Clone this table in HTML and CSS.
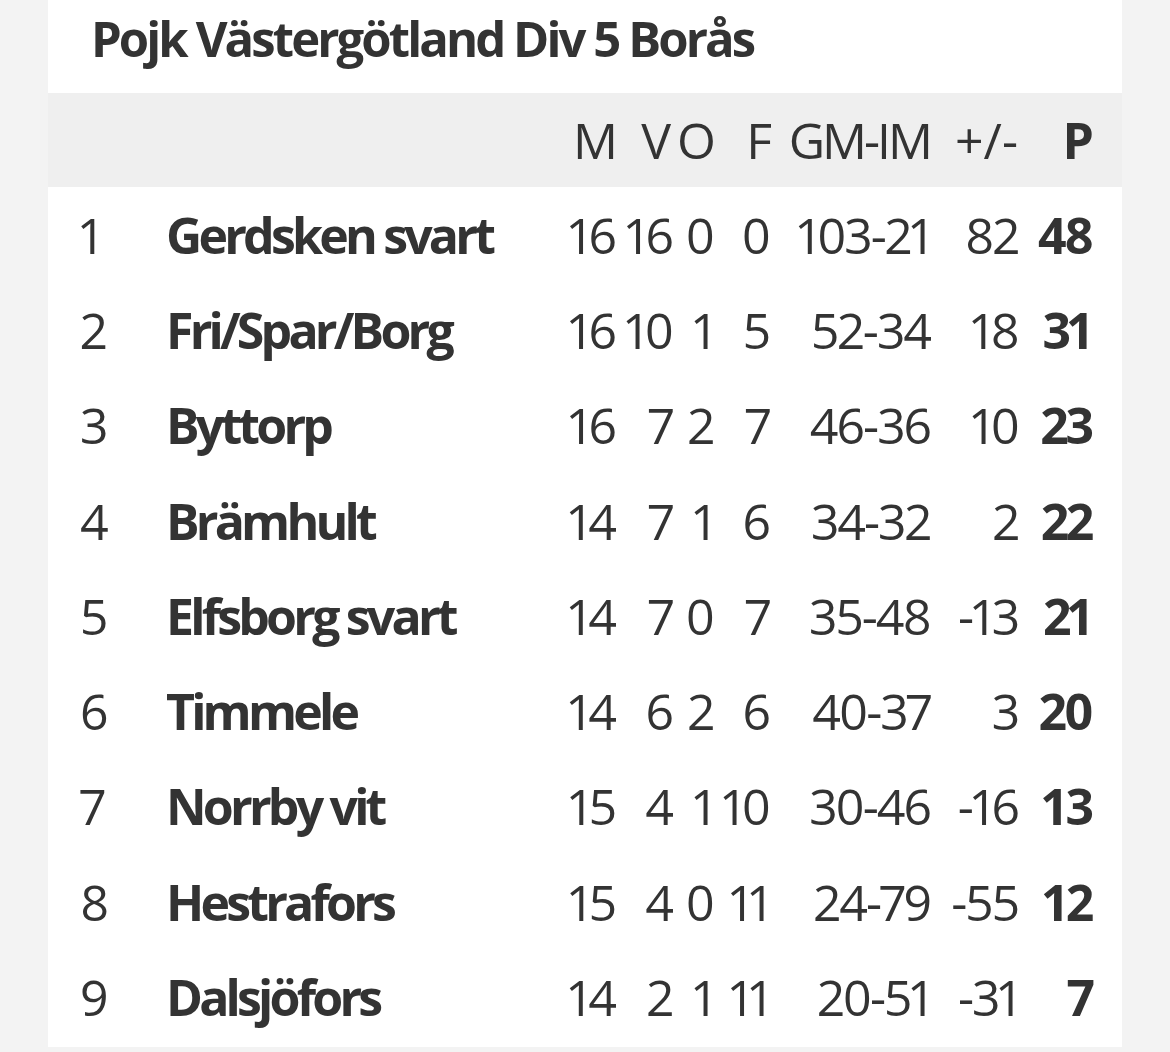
FILE: index.html
```html
<!DOCTYPE html>
<html lang="sv"><head><meta charset="utf-8"><title>Pojk Västergötland Div 5 Borås</title><link rel="stylesheet" href="styles.css"></head>
<body>
<div class="card">
  <h1 class="title">Pojk Västergötland Div 5 Borås</h1>
  <div class="row head">
    <span></span><span></span>
    <span class="num">M</span><span class="num hv">V</span><span class="num">O</span><span class="num">F</span><span class="num">GM-IM</span><span class="num hpm">+/-</span><span class="num pts">P</span>
  </div>
  <div class="row"><span class="rank">1</span><span class="team">Gerdsken svart</span><span class="num">16</span><span class="num">16</span><span class="num">0</span><span class="num">0</span><span class="num">103-21</span><span class="num">82</span><span class="num pts">48</span></div>
  <div class="row"><span class="rank">2</span><span class="team">Fri/Spar/Borg</span><span class="num">16</span><span class="num">10</span><span class="num">1</span><span class="num">5</span><span class="num">52-34</span><span class="num">18</span><span class="num pts">31</span></div>
  <div class="row"><span class="rank">3</span><span class="team">Byttorp</span><span class="num">16</span><span class="num">7</span><span class="num">2</span><span class="num">7</span><span class="num">46-36</span><span class="num">10</span><span class="num pts">23</span></div>
  <div class="row"><span class="rank">4</span><span class="team">Brämhult</span><span class="num">14</span><span class="num">7</span><span class="num">1</span><span class="num">6</span><span class="num">34-32</span><span class="num">2</span><span class="num pts">22</span></div>
  <div class="row"><span class="rank">5</span><span class="team">Elfsborg svart</span><span class="num">14</span><span class="num">7</span><span class="num">0</span><span class="num">7</span><span class="num">35-48</span><span class="num">-13</span><span class="num pts">21</span></div>
  <div class="row"><span class="rank">6</span><span class="team">Timmele</span><span class="num">14</span><span class="num">6</span><span class="num">2</span><span class="num">6</span><span class="num">40-37</span><span class="num">3</span><span class="num pts">20</span></div>
  <div class="row"><span class="rank">7</span><span class="team">Norrby vit</span><span class="num">15</span><span class="num">4</span><span class="num">1</span><span class="num">10</span><span class="num">30-46</span><span class="num">-16</span><span class="num pts">13</span></div>
  <div class="row"><span class="rank">8</span><span class="team">Hestrafors</span><span class="num">15</span><span class="num">4</span><span class="num">0</span><span class="num">11</span><span class="num">24-79</span><span class="num">-55</span><span class="num pts">12</span></div>
  <div class="row"><span class="rank">9</span><span class="team">Dalsjöfors</span><span class="num">14</span><span class="num">2</span><span class="num">1</span><span class="num">11</span><span class="num">20-51</span><span class="num">-31</span><span class="num pts">7</span></div>
</div>
</body></html>
```
FILE: styles.css
```css
html, body {
  margin: 0;
  padding: 0;
  background: #f3f3f3;
}
body {
  font-family: "Open Sans", "Noto Sans", sans-serif;
  color: #333333;
}
.card {
  margin-left: 48px;
  width: 1074px;
  background: #ffffff;
  padding-bottom: 2px;
}
.title {
  margin: 0;
  height: 93px;
  box-sizing: border-box;
  padding: 14px 0 0 43px;
  font-size: 49px;
  line-height: 49px;
  font-weight: 700;
  letter-spacing: -2.9px;
  white-space: nowrap;
}
.row {
  display: grid;
  grid-template-columns: 86px 392px 57px 57px 41px 56px 161px 88px 73px;
  align-items: center;
  height: 95.3px;
  padding: 0 28px 0 32px;
  font-size: 50px;
  line-height: 60px;
  font-weight: 400;
  letter-spacing: -2px;
  font-variant-numeric: proportional-nums;
  white-space: nowrap;
}
.head {
  height: 94px;
  background: #efefef;
  letter-spacing: -3px;
}
.num {
  text-align: right;
}
.hv {
  padding-right: 4px;
}
.hpm {
  letter-spacing: 0;
}
.team {
  font-weight: 700;
  letter-spacing: -3.8px;
}
.pts {
  font-weight: 700;
  letter-spacing: -3px;
}
```
